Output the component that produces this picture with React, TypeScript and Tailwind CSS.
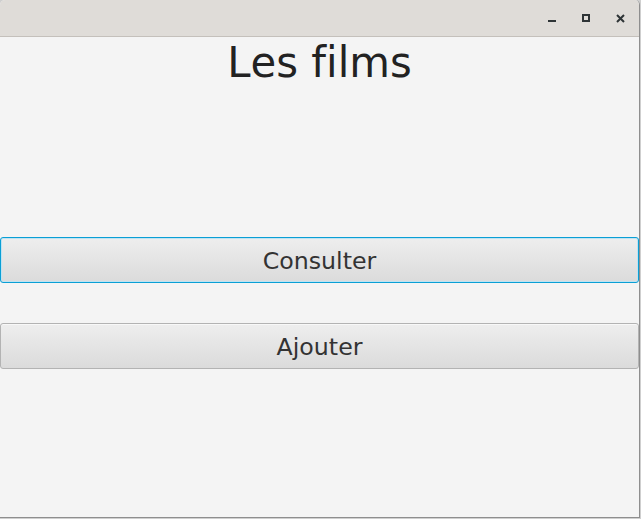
import React from "react";

const font = {
  fontFamily: '"DejaVu Sans", "Liberation Sans", sans-serif',
  fontVariantLigatures: "none" as const,
  fontFeatureSettings: '"liga" 0, "clig" 0, "kern" 0',
  fontKerning: "none" as const,
};

const App = () => {
  return (
    <div className="w-[641px] h-[519px] bg-[#cfcfcf]" style={font}>
      <div className="w-[640px] h-[518px] flex flex-col bg-[#f4f4f4] border-r border-b border-[#8e8e8e] rounded-t-[5px] overflow-hidden">
        {/* title bar */}
        <div className="h-[37px] shrink-0 flex items-center justify-end bg-[#dfdcd8] border-b border-[#c4c0bb]">
          <div className="w-[8px] h-[2px] bg-[#2e3436] mt-[5px] mr-[26px]" />
          <div className="w-[8px] h-[8px] border-2 border-[#2e3436] mr-[26px]" />
          <svg width="9" height="9" viewBox="0 0 9 9" className="mr-[14px]">
            <path d="M1 1 L8 8 M8 1 L1 8" stroke="#2e3436" strokeWidth="2" />
          </svg>
        </div>

        {/* content */}
        <div className="flex flex-col pt-[2px]">
          <h1 className="text-[41.8px] leading-[48px] text-[#222] text-center">{"Les f\u200Cilms"}</h1>

          <button className="mt-[150px] w-[639px] h-[46px] flex items-center justify-center pt-[3px] text-[23.7px] text-[#333] bg-gradient-to-b from-[#eeeeee] to-[#dbdbdb] border border-[#0a9fd5] rounded-[3px] shadow-[inset_0_0_0_1px_#bfe3f2]">
            Consulter
          </button>

          <button className="mt-[40px] w-[639px] h-[46px] flex items-center justify-center pt-[3px] text-[23.7px] text-[#333] bg-gradient-to-b from-[#eeeeee] to-[#dbdbdb] border border-[#b3b3b3] rounded-[3px] shadow-[inset_0_1px_0_#f8f8f8]">
            Ajouter
          </button>
        </div>
      </div>
    </div>
  );
};

export default App;
